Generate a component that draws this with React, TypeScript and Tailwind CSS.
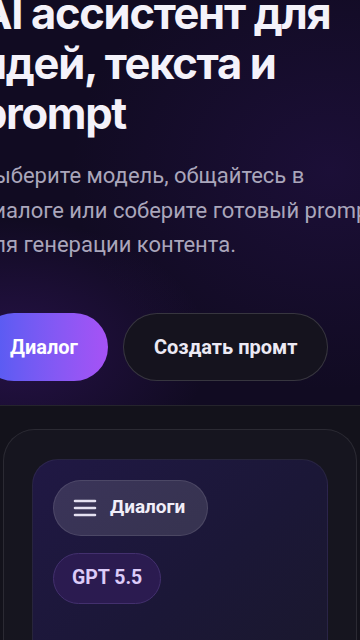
const MenuIcon = () => (
    <svg width="24" height="20" viewBox="0 0 24 20" fill="none" className="shrink-0">
        <path d="M2 3h20M2 10h20M2 17h20" stroke="#e4e0f0" strokeWidth="2.6" strokeLinecap="round" />
    </svg>
);

const Hero = () => {
    return (
        <section className="relative overflow-hidden bg-[#110b22] bg-[radial-gradient(ellipse_200px_130px_at_10px_350px,rgba(110,40,200,0.22),transparent),radial-gradient(ellipse_260px_220px_at_330px_170px,rgba(70,30,140,0.2),transparent)] pb-[24px]">
            <div className="-ml-[20px] w-[398px] -mt-[12px]">
                <h1 className="font-['Inter',sans-serif] text-[43.5px] leading-[50px] font-bold tracking-[-0.03em] text-[#f4f2fa]">
                    AI ассистент для идей, текста и prompt
                </h1>
                <p className="mt-[21px] font-['Roboto',sans-serif] text-[22px] leading-[34.5px] text-[#aaa6bb]">
                    Выберите модель, общайтесь в диалоге или соберите готовый prompt для генерации контента.
                </p>
                <div className="mt-[50px] flex gap-[15px]">
                    <button className="h-[68px] shrink-0 rounded-full bg-gradient-to-r from-[#4a5cf2] to-[#a652f5] px-[30px] font-['Roboto',sans-serif] text-[20px] font-bold text-white">
                        Диалог
                    </button>
                    <button className="h-[68px] shrink-0 rounded-full border border-white/15 bg-[#15131e] px-[30px] font-['Roboto',sans-serif] text-[20px] font-bold text-[#ece9f4]">
                        Создать промт
                    </button>
                </div>
            </div>
        </section>
    );
};

const Workspace = () => {
    return (
        <section className="border-t border-white/[0.08] bg-[#13121b] pt-[23px]">
            <div className="mx-[3px] rounded-[32px] border border-white/[0.09] bg-[#16151f] px-[28px] pt-[29px]">
                <div className="min-h-[260px] rounded-[26px] border border-white/[0.06] bg-gradient-to-br from-[#201844] via-[#1b1737] to-[#1a182b] p-5">
                    <div className="flex flex-col items-start gap-[17px]">
                        <button className="flex h-[56px] items-center gap-[13px] rounded-full border border-white/10 bg-white/[0.12] pl-[19px] pr-[22px] font-['Roboto',sans-serif] text-[19px] font-bold text-[#f1eef8]">
                            <MenuIcon />
                            Диалоги
                        </button>
                        <span className="flex h-[51px] items-center rounded-full border border-[#43306e] bg-[#2b1b50] px-[18px] font-['Roboto',sans-serif] text-[19.5px] font-bold text-[#dccbf8]">
                            GPT 5.5
                        </span>
                    </div>
                </div>
            </div>
        </section>
    );
};

export default function App() {
    return (
        <div className="w-[360px] h-[640px] overflow-hidden bg-[#13121b]">
            <Hero />
            <Workspace />
        </div>
    );
}
